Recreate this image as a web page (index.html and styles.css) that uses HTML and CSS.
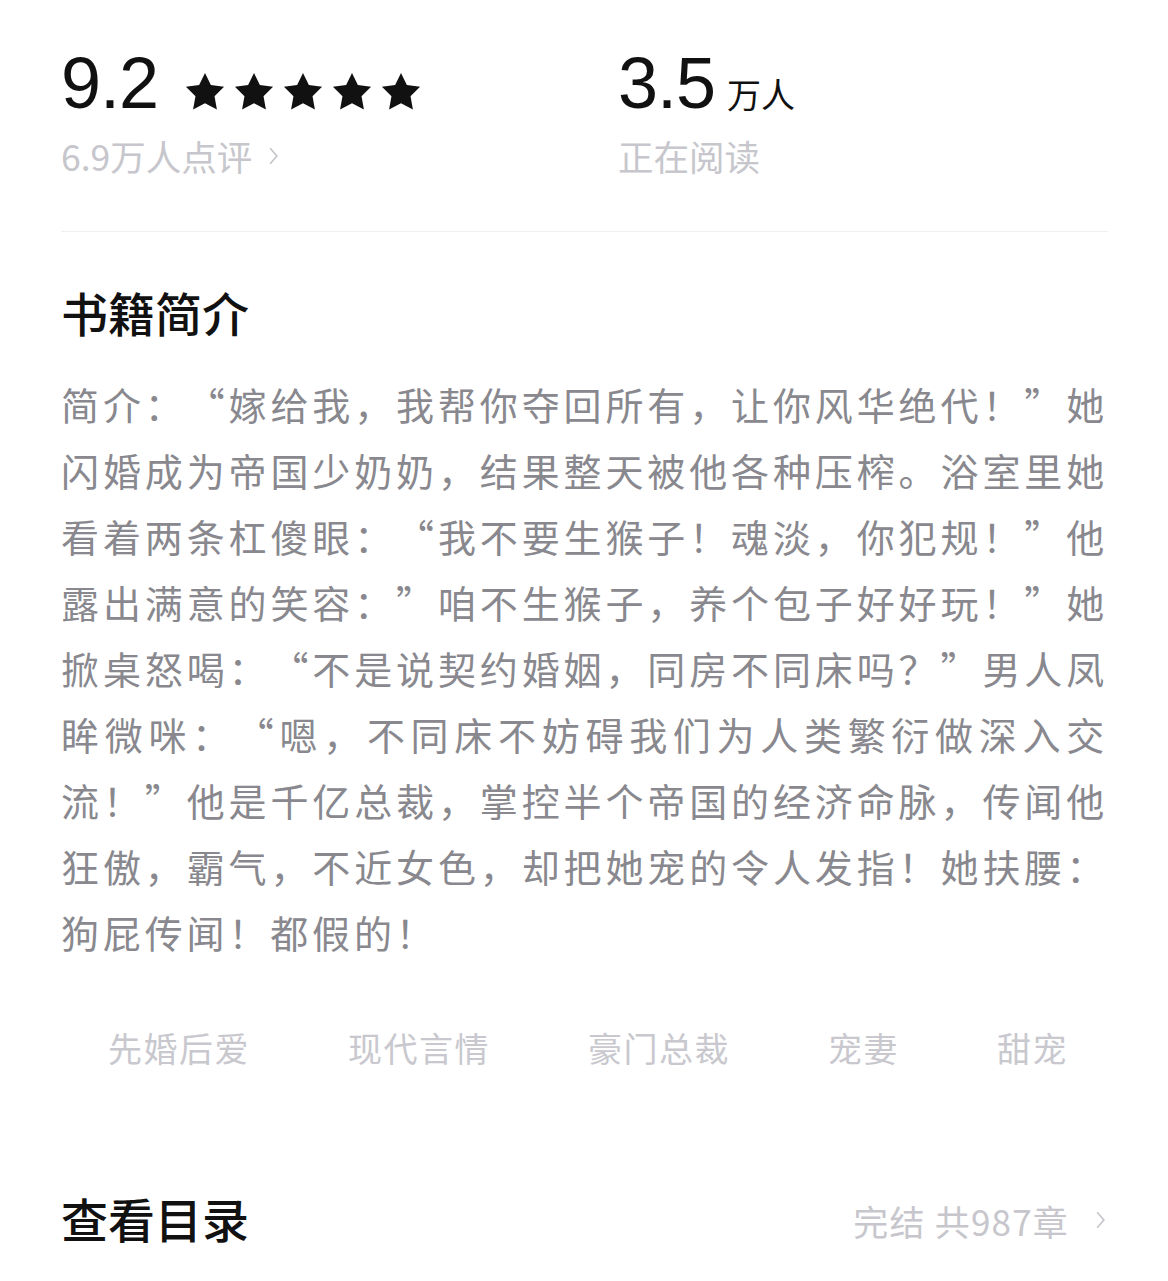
FILE: index.html
```html
<!DOCTYPE html>
<html lang="zh-CN">
<head>
    <meta charset="UTF-8">
    <meta name="viewport" content="width=device-width, initial-scale=1.0">
    <title>书籍详情</title>
    <link rel="stylesheet" href="styles.css">
</head>
<body>
    <div class="page">
        <!-- 评分和在读人数 -->
        <div class="stats">
            <div class="stat stat-score">
                <div class="stat-main">
                    <span class="stat-num">9.2</span>
                    <span class="stars">
                        <svg viewBox="0 0 24 24"><path d="M12 1.6l3.2 6.6 7.2 1-5.2 5.1 1.3 7.2L12 18.1l-6.5 3.4 1.3-7.2L1.6 9.2l7.2-1z"/></svg>
                        <svg viewBox="0 0 24 24"><path d="M12 1.6l3.2 6.6 7.2 1-5.2 5.1 1.3 7.2L12 18.1l-6.5 3.4 1.3-7.2L1.6 9.2l7.2-1z"/></svg>
                        <svg viewBox="0 0 24 24"><path d="M12 1.6l3.2 6.6 7.2 1-5.2 5.1 1.3 7.2L12 18.1l-6.5 3.4 1.3-7.2L1.6 9.2l7.2-1z"/></svg>
                        <svg viewBox="0 0 24 24"><path d="M12 1.6l3.2 6.6 7.2 1-5.2 5.1 1.3 7.2L12 18.1l-6.5 3.4 1.3-7.2L1.6 9.2l7.2-1z"/></svg>
                        <svg viewBox="0 0 24 24"><path d="M12 1.6l3.2 6.6 7.2 1-5.2 5.1 1.3 7.2L12 18.1l-6.5 3.4 1.3-7.2L1.6 9.2l7.2-1z"/></svg>
                    </span>
                </div>
                <div class="stat-label">6.9万人点评
                    <svg class="chevron" viewBox="0 0 10 18"><polyline points="2,2 8,9 2,16"/></svg>
                </div>
            </div>
            <div class="stat">
                <div class="stat-main">
                    <span class="stat-num">3.5</span>
                    <span class="stat-unit">万人</span>
                </div>
                <div class="stat-label">正在阅读</div>
            </div>
        </div>

        <div class="divider"></div>

        <!-- 简介 -->
        <h2 class="section-title">书籍简介</h2>
        <p class="intro">简介：“嫁给我，我帮你夺回所有，让你风华绝代！”她闪婚成为帝国少奶奶，结果整天被他各种压榨。浴室里她看着两条杠傻眼：“我不要生猴子！魂淡，你犯规！”他露出满意的笑容：”咱不生猴子，养个包子好好玩！”她掀桌怒喝：“不是说契约婚姻，同房不同床吗？”男人凤眸微咪：“嗯，不同床不妨碍我们为人类繁衍做深入交流！”他是千亿总裁，掌控半个帝国的经济命脉，传闻他狂傲，霸气，不近女色，却把她宠的令人发指！她扶腰：狗屁传闻！都假的！</p>

        <div class="tags">
            <span class="tag">先婚后爱</span>
            <span class="tag">现代言情</span>
            <span class="tag">豪门总裁</span>
            <span class="tag">宠妻</span>
            <span class="tag">甜宠</span>
        </div>

        <!-- 目录入口 -->
        <div class="catalog">
            <h2 class="section-title">查看目录</h2>
            <div class="catalog-info">完结 共987章
                <svg class="chevron" viewBox="0 0 10 18"><polyline points="2,2 8,9 2,16"/></svg>
            </div>
        </div>
    </div>
</body>
</html>
```

FILE: styles.css
```css
body {
    margin: 0;
    background: #fff;
    font-family: "Noto Sans CJK SC", "Noto Sans", sans-serif;
    color: #111;
}
.page {
    padding: 48px 60px 0 61px;
}
.stats {
    display: flex;
}
.stat-score {
    width: 557px;
}
.stat-main {
    display: flex;
    align-items: baseline;
    height: 70px;
}
.stat-num {
    font-family: "Liberation Sans", Arial, sans-serif;
    font-size: 72px;
    line-height: 70px;
    color: #111;
    letter-spacing: -1px;
}
.stars {
    display: flex;
    gap: 5px;
    margin-left: 25px;
    align-self: flex-end;
    margin-bottom: 4px;
}
.stars svg {
    width: 44px;
    height: 44px;
    fill: #111;
}
.stat-unit {
    font-size: 34px;
    margin-left: 12px;
    color: #111;
}
.stat-label {
    margin-top: 18px;
    font-size: 35.5px;
    line-height: 40px;
    color: #c6c6cc;
    display: flex;
    align-items: center;
}
.chevron {
    width: 11px;
    height: 20px;
    fill: none;
    stroke: #c6c6cc;
    stroke-width: 1.6;
    margin-left: 16px;
}
.divider {
    height: 1px;
    background: #f0f0f0;
    margin-top: 55px;
}
.section-title {
    margin: 52px 0 0;
    font-size: 47px;
    line-height: 56px;
    font-weight: 500;
    color: #111;
}
.intro {
    margin: 31px 0 0;
    font-size: 38px;
    line-height: 66px;
    letter-spacing: 3.85px;
    color: #88888e;
    text-align: justify;
    text-spacing-trim: space-all;
}
.tags {
    display: flex;
    gap: 98px;
    margin-top: 63px;
    padding-left: 47px;
}
.tag {
    font-size: 34px;
    line-height: 40px;
    letter-spacing: 1.5px;
    color: #c8c8ce;
}
.catalog {
    display: flex;
    justify-content: space-between;
    align-items: center;
    margin-top: 70px;
}
.catalog-info {
    display: flex;
    align-items: center;
    font-size: 35px;
    letter-spacing: 1.2px;
    color: #c6c6cc;
    margin-top: 56px;
    padding-right: 2px;
}
.catalog-info .chevron {
    margin-left: 26px;
    height: 22px;
}
```
